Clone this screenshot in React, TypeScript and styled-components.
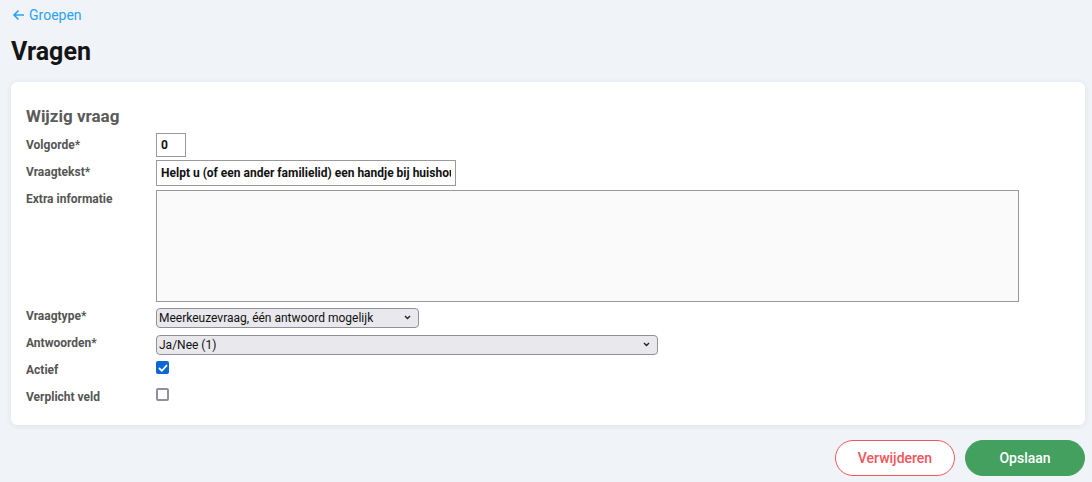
import React from 'react';
import styled, { createGlobalStyle } from 'styled-components';

const GlobalStyle = createGlobalStyle`
	html, body {
		margin: 0;
		padding: 0;
		background: #f0f3f7;
		font-family: Roboto, "Noto Sans", Arial, sans-serif;
		color: #1a1a1a;
	}
`;

const Page = styled.div`
	padding: 5px 7px 0 11px;
	width: 1092px;
	box-sizing: border-box;
`;

const BackLink = styled.a`
	display: inline-flex;
	align-items: center;
	gap: 4px;
	color: #2ba3f0;
	font-size: 14px;
	text-decoration: none;
	line-height: 20px;
	margin-left: 1px;
`;

const Title = styled.h1`
	margin: 12px 0 15px;
	font-size: 25px;
	font-weight: 700;
	line-height: 30px;
	color: #151515;
`;

const Card = styled.section`
	background: #fff;
	border-radius: 6px;
	box-shadow: 0 1px 6px rgba(30, 50, 80, 0.08);
	padding: 22px 15px 14px;
	width: 1074px;
	box-sizing: border-box;
`;

const CardTitle = styled.h2`
	margin: 1px 0 5px;
	font-size: 17px;
	font-weight: 700;
	color: #5a5a5a;
	line-height: 22px;
`;

const Row = styled.div<{ $pad?: number }>`
	display: grid;
	grid-template-columns: 130px 1fr;
	align-items: start;
	min-height: 27px;
	padding-bottom: ${({ $pad }) => $pad ?? 0}px;
`;

const Label = styled.label`
	font-size: 12px;
	font-weight: 700;
	color: #555;
	line-height: 27px;
`;

const TextInput = styled.input<{ $w: number; $h: number }>`
	box-sizing: border-box;
	width: ${({ $w }) => $w}px;
	height: ${({ $h }) => $h}px;
	margin-top: 1px;
	border: 1px solid #999;
	border-radius: 0;
	padding: 0 4px;
	font-family: inherit;
	font-size: 12px;
	font-weight: 700;
	color: #111;
	background: #fff;
	outline: none;
`;

const TextArea = styled.textarea`
	box-sizing: border-box;
	width: 863px;
	height: 112px;
	margin: 4px 0 0;
	border: 1px solid #999;
	background: #fafafa;
	resize: none;
	display: block;
	outline: none;
`;

const SelectWrap = styled.div<{ $w: number }>`
	position: relative;
	width: ${({ $w }) => $w}px;
	margin-top: 4px;
`;

const Select = styled.select`
	appearance: none;
	box-sizing: border-box;
	width: 100%;
	height: 20px;
	border: 1px solid #8f8f9d;
	border-radius: 4px;
	background: #e9e9ed;
	padding: 0 20px 0 2px;
	font-family: inherit;
	font-size: 12px;
	color: #111;
	outline: none;
`;

const Chevron = styled.svg`
	position: absolute;
	right: 8px;
	top: 8px;
	pointer-events: none;
`;

const Check = styled.span<{ $on?: boolean }>`
	box-sizing: border-box;
	display: flex;
	align-items: center;
	justify-content: center;
	width: 13px;
	height: 13px;
	margin-top: 4px;
	border-radius: 2px;
	background: ${({ $on }) => ($on ? '#0b66d6' : '#fff')};
	border: ${({ $on }) => ($on ? 'none' : '2px solid #8f8f9d')};
`;

const Actions = styled.div`
	display: flex;
	justify-content: flex-end;
	gap: 10px;
	margin-top: 15px;
`;

const Button = styled.button<{ $variant: 'danger' | 'primary' }>`
	width: 120px;
	height: 36px;
	border-radius: 18px;
	font-family: inherit;
	font-size: 14px;
	font-weight: 500;
	cursor: pointer;
	border: 1px solid ${({ $variant }) => ($variant === 'danger' ? '#f2545b' : '#43a05f')};
	background: ${({ $variant }) => ($variant === 'danger' ? '#fff' : '#43a05f')};
	color: ${({ $variant }) => ($variant === 'danger' ? '#f2545b' : '#fff')};
`;

const ChevronIcon = () => (
	<Chevron width="7" height="5" viewBox="0 0 7 5">
		<path d="M1 1l2.5 2.5L6 1" fill="none" stroke="#222" strokeWidth="1.4" />
	</Chevron>
);

export default function App() {
	return (
		<>
			<GlobalStyle />
			<Page>
				<BackLink href="#">
					<svg width="13" height="12" viewBox="0 0 13 12">
						<path d="M12 6H2M6.5 1.5L2 6l4.5 4.5" fill="none" stroke="#2ba3f0" strokeWidth="1.6" />
					</svg>
					Groepen
				</BackLink>
				<Title>Vragen</Title>
				<Card>
					<CardTitle>Wijzig vraag</CardTitle>
					<Row>
						<Label>Volgorde*</Label>
						<TextInput $w={30} $h={24} defaultValue="0" />
					</Row>
					<Row>
						<Label>Vraagtekst*</Label>
						<TextInput
							$w={300}
							$h={26}
							defaultValue="Helpt u (of een ander familielid) een handje bij huishoudelijke taken?"
						/>
					</Row>
					<Row $pad={1}>
						<Label>Extra informatie</Label>
						<TextArea />
					</Row>
					<Row>
						<Label>Vraagtype*</Label>
						<SelectWrap $w={263}>
							<Select defaultValue="a">
								<option value="a">Meerkeuzevraag, één antwoord mogelijk</option>
							</Select>
							<ChevronIcon />
						</SelectWrap>
					</Row>
					<Row>
						<Label>Antwoorden*</Label>
						<SelectWrap $w={502}>
							<Select defaultValue="a">
								<option value="a">Ja/Nee (1)</option>
							</Select>
							<ChevronIcon />
						</SelectWrap>
					</Row>
					<Row>
						<Label>Actief</Label>
						<Check $on>
							<svg width="10" height="8" viewBox="0 0 10 8">
								<path d="M1 4l2.8 2.8L9 1.2" fill="none" stroke="#fff" strokeWidth="1.8" />
							</svg>
						</Check>
					</Row>
					<Row>
						<Label>Verplicht veld</Label>
						<Check />
					</Row>
				</Card>
				<Actions>
					<Button $variant="danger">Verwijderen</Button>
					<Button $variant="primary">Opslaan</Button>
				</Actions>
			</Page>
		</>
	);
}
